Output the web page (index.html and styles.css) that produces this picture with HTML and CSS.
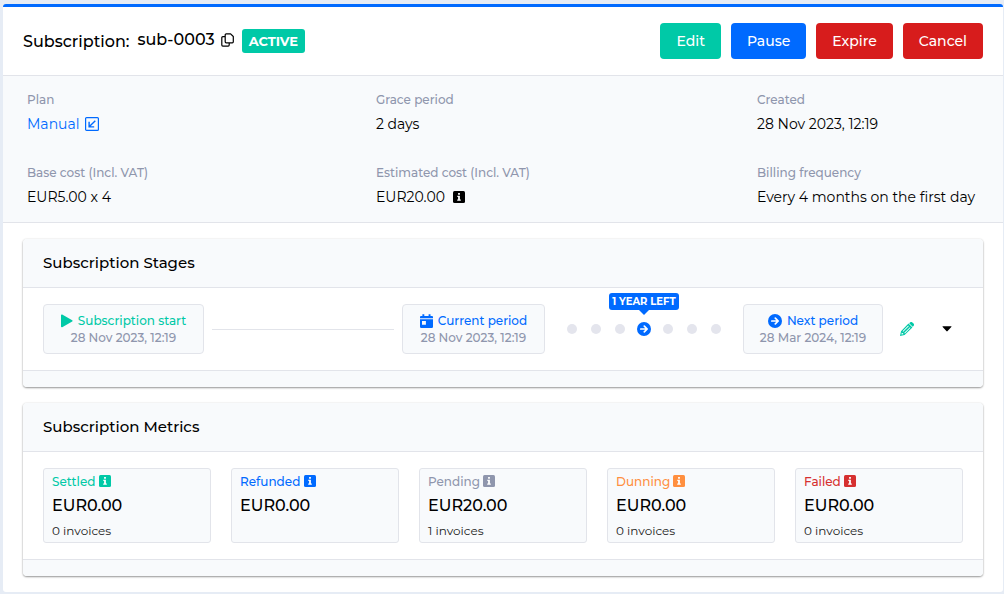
FILE: index.html
```html
<!DOCTYPE html>
<html lang="en">
<head>
<meta charset="utf-8">
<meta name="viewport" content="width=device-width, initial-scale=1">
<title>Subscription: sub-0003</title>
<link rel="stylesheet" href="styles.css">
</head>
<body>
<svg class="sprite" aria-hidden="true">
  <symbol id="info" viewBox="0 0 12 12"><rect width="12" height="12" rx="1.5" fill="currentColor"/><path fill="#fff" d="M5.1 2h1.8v1.7H5.1zM4.3 4.7h2.6v3.7h.9v1.3H4.2V8.4h.9V6h-.8z"/></symbol>
  <symbol id="arrow" viewBox="0 0 14 14"><circle cx="7" cy="7" r="7" fill="currentColor"/><path fill="none" stroke="#fff" stroke-width="1.7" stroke-linecap="round" stroke-linejoin="round" d="M3.8 7h6.2M7.3 4.1 10.2 7 7.3 9.9"/></symbol>
</svg>
<main class="page">
  <header class="page-header">
    <div class="heading">
      <h1 class="title">Subscription:</h1>
      <span class="subscription-id">sub-0003
        <button class="icon-button" type="button" aria-label="Copy subscription ID"><svg width="13" height="14" viewBox="0 0 13 14" fill="none" stroke="currentColor" stroke-width="1.2" stroke-linejoin="round"><path d="M5.2.8h4.4l2.7 2.7v5.3a1 1 0 0 1-1 1H5.2a1 1 0 0 1-1-1v-7a1 1 0 0 1 1-1zM4.2 3.7H1.8a1 1 0 0 0-1 1v7.4a1 1 0 0 0 1 1h5.4a1 1 0 0 0 1-1V9.8"/></svg></button>
      </span>
      <span class="badge">ACTIVE</span>
    </div>
    <div class="actions">
      <button class="button green" type="button">Edit</button>
      <button class="button blue" type="button">Pause</button>
      <button class="button red" type="button">Expire</button>
      <button class="button red" type="button">Cancel</button>
    </div>
  </header>
  <dl class="details">
    <div><dt>Plan</dt><dd><a href="#plan">Manual <svg class="open-icon" width="14" height="14" viewBox="0 0 14 14" fill="none" stroke="currentColor"><rect x=".6" y=".6" width="12.8" height="12.8" rx="1" stroke-width="1.2"/><path stroke-width="1.4" d="M10.3 3.7 4.4 9.6M4.1 4.8v5.1h5.1"/></svg></a></dd></div>
    <div><dt>Grace period</dt><dd>2 days</dd></div>
    <div><dt>Created</dt><dd>28 Nov 2023, 12:19</dd></div>
    <div><dt>Base cost (Incl. VAT)</dt><dd>EUR5.00 x 4</dd></div>
    <div><dt>Estimated cost (Incl. VAT)</dt><dd>EUR20.00 <svg class="info-icon spaced"><use href="#info"/></svg></dd></div>
    <div><dt>Billing frequency</dt><dd>Every 4 months on the first day</dd></div>
  </dl>
  <div class="cards">
    <section class="card">
      <h2 class="card-header">Subscription Stages</h2>
      <div class="card-body stages">
        <div class="stage">
          <strong class="stage-name text-green"><svg width="12" height="14" viewBox="0 0 12 14"><path fill="currentColor" d="M0 1.2C0 .5.7.3 1.2.6l10 5.6c.5.3.5 1 0 1.3l-10 5.7c-.5.3-1.2 0-1.2-.7z"/></svg>Subscription start</strong>
          <span>28 Nov 2023, 12:19</span>
        </div>
        <div class="line"></div>
        <div class="stage">
          <strong class="stage-name text-blue"><svg width="13" height="14" viewBox="0 0 13 14"><path fill="currentColor" fill-rule="evenodd" d="M2.4.3h1.9V2h4.3V.3h1.9V2H12a1 1 0 0 1 1 1v1.2H0V3a1 1 0 0 1 1-1h1.4zM0 5.2h13v7.5a1.2 1.2 0 0 1-1.2 1.2H1.2A1.2 1.2 0 0 1 0 12.7zM2 7v3.7h3.9V7z"/></svg>Current period</strong>
          <span>28 Nov 2023, 12:19</span>
        </div>
        <ol class="dots">
          <li></li><li></li><li></li>
          <li class="current"><span class="tooltip">1 YEAR LEFT</span><svg class="arrow-icon"><use href="#arrow"/></svg></li>
          <li></li><li></li><li></li>
        </ol>
        <div class="stage">
          <strong class="stage-name text-blue"><svg class="arrow-icon"><use href="#arrow"/></svg>Next period</strong>
          <span>28 Mar 2024, 12:19</span>
        </div>
        <div class="stage-actions">
          <button class="icon-button text-green" type="button" aria-label="Edit next period"><svg width="14" height="14" viewBox="0 0 14 14"><path fill="currentColor" fill-rule="evenodd" d="M9.2 1.3 10 .5a1.7 1.7 0 0 1 2.4 0l1.1 1.1a1.7 1.7 0 0 1 0 2.4l-.8.8zM8.5 1.6l3.9 3.9-7.8 7.6L0 14l1-4.8zM8.2 3.6 2.6 9.2l.6.6 5.6-5.6zM9.9 5.2l-5.6 5.6.6.6 5.6-5.6zM1.8 10.6l-.4 2 2-.4-.3-1-1-.2z"/></svg></button>
          <button class="icon-button" type="button" aria-label="More actions"><svg width="10" height="6" viewBox="0 0 9 6"><path fill="currentColor" d="M.4.3h8.2c.4 0 .5.5.2.8L5.1 5.1a.8.8 0 0 1-1.2 0L.2 1.1C-.1.8 0 .3.4.3z"/></svg></button>
        </div>
      </div>
      <div class="card-footer"></div>
    </section>
    <section class="card">
      <h2 class="card-header">Subscription Metrics</h2>
      <div class="card-body metrics">
        <div class="metric"><h3 class="text-green">Settled <svg class="info-icon"><use href="#info"/></svg></h3><strong>EUR0.00</strong><span>0 invoices</span></div>
        <div class="metric"><h3 class="text-blue">Refunded <svg class="info-icon"><use href="#info"/></svg></h3><strong>EUR0.00</strong></div>
        <div class="metric"><h3 class="text-gray">Pending <svg class="info-icon"><use href="#info"/></svg></h3><strong>EUR20.00</strong><span>1 invoices</span></div>
        <div class="metric"><h3 class="text-orange">Dunning <svg class="info-icon"><use href="#info"/></svg></h3><strong>EUR0.00</strong><span>0 invoices</span></div>
        <div class="metric"><h3 class="text-red">Failed <svg class="info-icon"><use href="#info"/></svg></h3><strong>EUR0.00</strong><span>0 invoices</span></div>
      </div>
      <div class="card-footer"></div>
    </section>
  </div>
</main>
</body>
</html>
```
FILE: styles.css
```css
* { box-sizing: border-box; }
body {
  margin: 0;
  padding: 4px 1px 2px 3px;
  background: #e6ecf5;
  color: #000;
  font-family: Montserrat, Inter, sans-serif;
  font-size: 14px;
  line-height: 20px;
}
h1, h2, h3, dl, dd, ol { margin: 0; padding: 0; }
h1, h2, h3, strong { font-weight: 500; }
svg { flex: none; }
button { font: inherit; cursor: pointer; }
.sprite { position: absolute; width: 0; height: 0; }
.text-green { color: #00c9a7; }
.text-blue { color: #006aff; }
.text-gray { color: #8f96ad; }
.text-orange { color: #ff8f3f; }
.text-red { color: #d63030; }

.page {
  background: #fff;
  border-top: 3px solid #006aff;
  border-radius: 3px;
}
.page-header {
  display: flex;
  justify-content: space-between;
  align-items: center;
  padding: 16px 20px;
  border-bottom: 1px solid #e2e4ea;
}
.heading { display: flex; align-items: center; gap: 8px; }
.title { padding-top: 2px; font-size: 16px; line-height: 20px; }
.subscription-id {
  display: flex;
  align-items: center;
  gap: 6px;
  margin-bottom: 2px;
  font-size: 16px;
  font-weight: 500;
}
.icon-button {
  display: flex;
  align-items: center;
  justify-content: center;
  padding: 0;
  border: 0;
  background: none;
}
.icon-button:not(.text-green) { color: #000; }
.badge {
  padding: 2px 7px;
  border-radius: 3px;
  background: #00c9a7;
  color: #fff;
  font-size: 13px;
  font-weight: 700;
}
.actions { display: flex; gap: 10px; }
.button {
  padding: 8px 16px;
  border: 0;
  border-radius: 4px;
  color: #fff;
  font-weight: 500;
}
.green { background: #00c9a7; }
.blue { background: #006aff; }
.red { background: #d71c1c; }

.details {
  display: grid;
  grid-template-columns: 349fr 381fr 226fr;
  row-gap: 29px;
  padding: 14px 20px 15px 24px;
  background: #f8fafc;
  border-bottom: 1px solid #e2e4ea;
}
.details dt { color: #8f96ad; font-size: 12px; font-weight: 500; }
.details dd { margin-top: 4px; }
.details a { color: #006aff; text-decoration: none; }
.open-icon { margin-left: 2px; vertical-align: -2px; }
.info-icon { width: 12px; height: 12px; vertical-align: -1px; }
.spaced { margin-left: 4px; }

.cards { display: grid; gap: 16px; padding: 16px 20px; }
.card {
  background: #fff;
  border-radius: 4px;
  box-shadow: 0 1px 2px rgba(0, 0, 0, .4), 0 0 2px rgba(0, 0, 0, .1);
}
.card-header {
  padding: 14px 20px;
  border-bottom: 1px solid #e2e4ea;
  border-radius: 4px 4px 0 0;
  background: #f8fafc;
  font-size: 15px;
}
.card-body { padding: 16px 20px; }
.card-footer {
  height: 17px;
  border-top: 1px solid #e2e4ea;
  border-radius: 0 0 4px 4px;
  background: #f8fafc;
}
.stages {
  display: grid;
  grid-template-columns: 161px 1fr 143px auto 140px auto;
  align-items: center;
}
.stage {
  padding: 7px 0;
  border: 1px solid #e2e4ea;
  border-radius: 4px;
  background: #f8fafc;
  color: #8f96ad;
  font-size: 12px;
  font-weight: 500;
  line-height: 17px;
  text-align: center;
}
.stage-name {
  display: flex;
  align-items: center;
  justify-content: center;
  gap: 5px;
}
.stage span { display: block; }
.arrow-icon { width: 14px; height: 14px; }
.line { margin: 0 8px; border-top: 1px solid #e2e4ea; }
.dots {
  display: flex;
  padding: 0 15px;
  list-style: none;
}
.dots li {
  position: relative;
  display: flex;
  align-items: center;
  justify-content: center;
  width: 24px;
  height: 24px;
}
.dots li::before {
  content: "";
  width: 10px;
  height: 10px;
  border-radius: 50%;
  background: #e4e5ed;
}
.dots .current { color: #006aff; }
.dots .current::before { display: none; }
.tooltip {
  position: absolute;
  bottom: 31px;
  left: 50%;
  transform: translateX(-50%);
  width: 70px;
  border-radius: 3px;
  background: #006aff;
  color: #fff;
  font-size: 10px;
  font-weight: 700;
  line-height: 17px;
  text-align: center;
  white-space: nowrap;
}
.tooltip::after {
  content: "";
  position: absolute;
  top: 100%;
  left: 50%;
  margin-left: -5px;
  border: 5px solid transparent;
  border-top-color: #006aff;
  border-bottom: 0;
}
.stage-actions { display: flex; gap: 8px; margin-left: 8px; }
.stage-actions .icon-button { width: 32px; height: 32px; }

.metrics {
  display: grid;
  grid-template-columns: repeat(5, 1fr);
  gap: 20px;
}
.metric {
  display: flex;
  flex-direction: column;
  padding: 2px 8px 0;
  border: 1px solid #e2e4ea;
  border-radius: 3px;
  background: #f8fafc;
}
.metric h3 { font-size: 12px; line-height: 21px; }
.metric strong { font-size: 16px; line-height: 28px; }
.metric span { color: #222; font-size: 12px; line-height: 22px; }
```
